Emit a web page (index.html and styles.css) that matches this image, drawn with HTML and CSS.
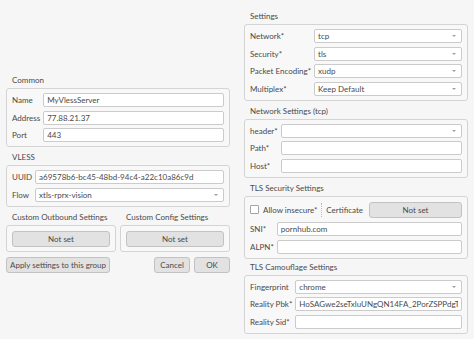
FILE: index.html
```html
<!DOCTYPE html>
<html lang="en">
  <head>
    <meta charset="UTF-8" />
    <title>Edit Profile</title>
    <link rel="stylesheet" href="styles.css">
  </head>
  <body>
    <div class="dialog">
      <div class="col col-left">
        <div class="group-title">Common</div>
        <div class="group form">
          <label>Name</label>
          <input class="field" value="MyVlessServer" />
          <label>Address</label>
          <input class="field" value="77.88.21.37" />
          <label>Port</label>
          <input class="field" value="443" />
        </div>

        <div class="group-title gap-top">VLESS</div>
        <div class="group form">
          <label>UUID</label>
          <input class="field" value="a69578b6-bc45-48bd-94c4-a22c10a86c9d" />
          <label>Flow</label>
          <div class="select"><span>xtls-rprx-vision</span><i class="arrow"></i></div>
        </div>

        <div class="custom-row">
          <div class="custom">
            <div class="group-title gap-top">Custom Outbound Settings</div>
            <div class="group pad-btn">
              <button class="btn btn-wide">Not set</button>
            </div>
          </div>
          <div class="custom">
            <div class="group-title gap-top">Custom Config Settings</div>
            <div class="group pad-btn">
              <button class="btn btn-wide">Not set</button>
            </div>
          </div>
        </div>

        <div class="actions">
          <button class="btn">Apply settings to this group</button>
          <span class="spacer"></span>
          <button class="btn btn-small">Cancel</button>
          <button class="btn btn-small">OK</button>
        </div>
      </div>

      <div class="col col-right">
        <div class="group-title">Settings</div>
        <div class="group form">
          <label>Network*</label>
          <div class="select"><span>tcp</span><i class="arrow"></i></div>
          <label>Security*</label>
          <div class="select"><span>tls</span><i class="arrow"></i></div>
          <label>Packet Encoding*</label>
          <div class="select"><span>xudp</span><i class="arrow"></i></div>
          <label>Multiplex*</label>
          <div class="select"><span>Keep Default</span><i class="arrow"></i></div>
        </div>

        <div class="group-title gap-top">Network Settings (tcp)</div>
        <div class="group form">
          <label>header*</label>
          <div class="select"><span></span><i class="arrow"></i></div>
          <label>Path*</label>
          <input class="field" value="" />
          <label>Host*</label>
          <input class="field" value="" />
        </div>

        <div class="group-title gap-top">TLS Security Settings</div>
        <div class="group form form-tls">
          <div class="tls-row">
            <label class="check"><span class="box"></span>Allow insecure*</label>
            <span class="sep"></span>
            <label>Certificate</label>
            <button class="btn btn-cert">Not set</button>
          </div>
          <label>SNI*</label>
          <input class="field" value="pornhub.com" />
          <label>ALPN*</label>
          <input class="field" value="" />
        </div>

        <div class="group-title">TLS Camouflage Settings</div>
        <div class="group form">
          <label>Fingerprint</label>
          <div class="select"><span>chrome</span><i class="arrow"></i></div>
          <label>Reality Pbk*</label>
          <input class="field" value="HoSAGwe2seTxluUNgQN14FA_2PorZSPPdgTEI" />
          <label>Reality Sid*</label>
          <input class="field" value="" />
        </div>
      </div>
    </div>
  </body>
</html>
```

FILE: styles.css
```css
body {
  margin: 0;
  background: #f6f6f6;
  color: #4a4a4a;
  font-family: "Lato", sans-serif;
  font-size: 8px;
}

.dialog {
  display: flex;
  align-items: center;
  gap: 14px;
  padding: 0 6px;
  height: 339px;
  box-sizing: border-box;
}

.col {
  width: 224px;
  display: flex;
  flex-direction: column;
}

.col-left {
  margin-top: 6px;
}

.col-right {
  align-self: flex-start;
  padding-top: 8px;
}

.group-title {
  height: 16px;
  line-height: 16px;
  padding-left: 6px;
}

.gap-top {
  margin-top: 2px;
}

.group {
  border: 1px solid #d4d4d4;
  border-radius: 3px;
  background: #f8f8f8;
}

.form {
  display: grid;
  grid-template-columns: auto 1fr;
  align-items: center;
  column-gap: 3px;
  row-gap: 3.5px;
  padding: 4px 5px 4px 5px;
}

.form-tls {
  padding-top: 5px;
}

.form label {
  white-space: nowrap;
}

.field,
.select {
  height: 14px;
  box-sizing: border-box;
  border: 1px solid #cbcbcb;
  border-radius: 2px;
  background: #fff;
  font: inherit;
  color: #4a4a4a;
  padding: 0 3px;
  margin: 0;
  min-width: 0;
  outline: none;
}

.select {
  display: flex;
  align-items: center;
  justify-content: space-between;
}

.arrow {
  width: 0;
  height: 0;
  border-left: 2px solid transparent;
  border-right: 2px solid transparent;
  border-top: 2px solid #a0a0a0;
  margin-right: 2px;
}

.tls-row {
  grid-column: 1 / -1;
  display: flex;
  align-items: center;
  gap: 4px;
  margin-bottom: 1px;
}

.check {
  display: flex;
  align-items: center;
  gap: 4px;
}

.box {
  width: 7px;
  height: 7px;
  border: 1px solid #a4a4a4;
  border-radius: 1px;
  background: #fff;
}

.sep {
  align-self: stretch;
  border-left: 1px dotted #b8b8b8;
  margin: 1px 0;
}

.btn {
  font: inherit;
  color: #4a4a4a;
  height: 16px;
  padding: 0 3px;
  border: 1px solid #c2c2c2;
  border-radius: 3px;
  background: #e2e2e2;
}

.btn-wide {
  width: 100%;
}

.btn-cert {
  flex: 1;
  margin-left: 2px;
}

.btn-small {
  width: 36px;
}

.custom-row {
  display: flex;
  gap: 4px;
}

.custom {
  flex: 1;
  display: flex;
  flex-direction: column;
}

.pad-btn {
  padding: 5px 5px 4px;
}

.actions {
  display: flex;
  gap: 4px;
  margin-top: 5px;
}

.spacer {
  flex: 1;
}
```
